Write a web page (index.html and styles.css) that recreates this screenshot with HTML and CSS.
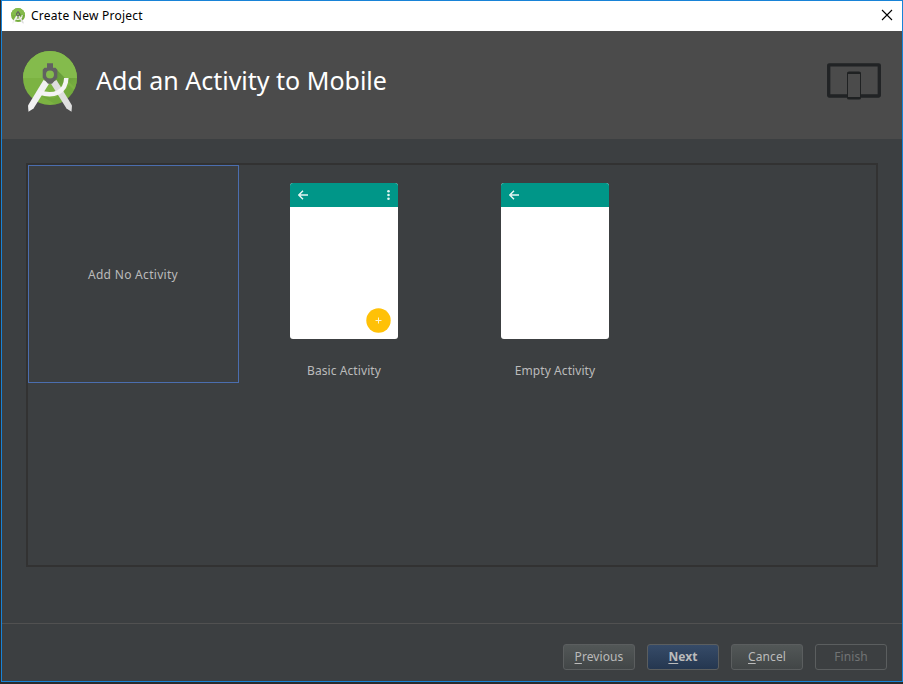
FILE: index.html
```html
<!DOCTYPE html>
<html lang="en">
<head>
<meta charset="utf-8">
<title>Create New Project</title>
<link rel="stylesheet" href="styles.css">
</head>
<body>
<svg class="defs" width="0" height="0">
  <defs>
    <linearGradient id="shade" x1="0" y1="0" x2="1" y2="1"><stop offset="0" stop-color="#4d7f2c"/><stop offset="1" stop-color="#7cb342"/></linearGradient>
    <clipPath id="disc"><circle cx="27" cy="27" r="27"/></clipPath>
  </defs>
  <symbol id="studio" viewBox="0 0 54 61">
    <circle cx="27" cy="27" r="27" fill="#7cb342"/>
    <path d="M0 27a27 27 0 0 1 54 0z" fill="#84bb4c"/>
    <g clip-path="url(#disc)">
      <path d="M32 17L54 39V27H45.500L42 36L30 32z" fill="url(#shade)" opacity=".7"/>
      <path d="M18 45L31 47L41 41L46 34L54 42V54H34z" fill="#689f38" opacity=".45"/>
    </g>
    <path d="M20.500 29L26.500 32L10.500 57.500L5.500 60.800L5 54.500z" fill="#f1f1f1"/>
    <path d="M33.500 29L27.500 32L43.500 57.500L48.500 60.800L49 54.500z" fill="#dedede"/>
    <path d="M43.300 27Q43 37.500 35 41.500Q27 45 16.500 41.300" fill="none" stroke="#f4f4f4" stroke-width="4.500"/>
    <path fill-rule="evenodd" d="M24 12.300h6v4.500h2.500l1.800 2v8l-1.800 2l-3.500 4h-4l-3.500-4l-1.800-2v-8l1.800-2H24zM27 19.500a4 4 0 1 0 0 8a4 4 0 1 0 0-8z" fill="#616161"/>
  </symbol>
  <symbol id="back" viewBox="0 0 10 10"><path d="M10 5H1M5 .7L.8 5L5 9.300" fill="none" stroke="#e4f5f2" stroke-width="1.400"/></symbol>
</svg>
<div class="window">
  <div class="titlebar">
    <svg class="app-icon" width="14" height="16"><use href="#studio"/></svg>
    <span class="caption">Create New Project</span>
    <svg class="close" width="10" height="10" viewBox="0 0 10 10"><path d="M0 0L10 10M10 0L0 10" stroke="#000" stroke-width="1.100"/></svg>
  </div>
  <header class="header">
    <svg class="logo" width="54" height="61"><use href="#studio"/></svg>
    <h1 class="heading">Add an Activity to Mobile</h1>
    <svg class="devices" width="54" height="37" viewBox="0 0 54 37">
      <rect x="1.700" y="1.800" width="50.600" height="31.200" rx=".5" fill="none" stroke="#212325" stroke-width="3.300"/>
      <path d="M20 10Q20 8.500 22 8.500H32Q34 8.500 34 10V35Q34 36.500 32 36.500H22Q20 36.500 20 35z" fill="#1f2122"/>
      <path d="M21 11H33V34H21z" fill="#4b4b4b"/>
    </svg>
  </header>
  <main class="content">
    <div class="gallery">
      <div class="tile selected"><span class="label">Add No Activity</span></div>
      <div class="tile">
        <div class="phone">
          <div class="appbar"><svg width="10" height="10"><use href="#back"/></svg><svg width="3" height="10" viewBox="0 0 3 10" fill="#e4f5f2"><circle cx="1.500" cy="1.300" r="1.300"/><circle cx="1.500" cy="5" r="1.300"/><circle cx="1.500" cy="8.700" r="1.300"/></svg></div>
          <svg class="fab" width="25" height="25" viewBox="0 0 25 25"><circle cx="12.500" cy="12.500" r="12.200" fill="#ffc107"/><path d="M12.500 9.500v6M9.500 12.500h6" stroke="#fff4d0" stroke-width="1"/></svg>
        </div>
        <span class="label">Basic Activity</span>
      </div>
      <div class="tile">
        <div class="phone">
          <div class="appbar"><svg width="10" height="10"><use href="#back"/></svg></div>
        </div>
        <span class="label">Empty Activity</span>
      </div>
    </div>
  </main>
  <footer class="footer">
    <button class="btn"><span><u>P</u>revious</span></button>
    <button class="btn primary"><span><u>N</u>ext</span></button>
    <button class="btn"><span><u>C</u>ancel</span></button>
    <button class="btn disabled" disabled><span>Finish</span></button>
  </footer>
</div>
</body>
</html>
```
FILE: styles.css
```css
* { box-sizing: border-box; }
body {
  margin: 0;
  width: 903px;
  height: 684px;
  padding-left: 1px;
  overflow: hidden;
  background: #2b2b2b;
  font-family: "Noto Sans", "Open Sans", sans-serif;
  font-size: 12px;
}
.defs { position: absolute; }
.window {
  display: flex;
  flex-direction: column;
  height: 682px;
  border: 1px solid #1883d7;
  background: #3c3f41;
}
.titlebar {
  display: flex;
  align-items: center;
  flex: 0 0 30px;
  padding: 0 10px 0 9px;
  background: #fff;
  color: #000;
}
.app-icon { margin-right: 6px; }
.caption { line-height: 16px; letter-spacing: 0.25px; }
.close { margin-left: auto; margin-top: -2px; overflow: visible; }
.header {
  display: flex;
  flex: 0 0 108px;
  padding: 20px 21px 0;
  background: #4b4b4b;
}
.heading {
  margin: 10px 0 0 19px;
  font-size: 25px;
  line-height: 38px;
  font-weight: 400;
  color: #fff;
}
.devices { margin: 12px 0 0 auto; }
.content { flex: 1; padding: 24px 24px 0; }
.gallery {
  display: flex;
  height: 404px;
  border: 2px solid #323232;
}
.tile {
  display: flex;
  flex-direction: column;
  align-items: center;
  width: 211px;
  height: 218px;
  padding: 18px 1px 0 0;
  color: #bbb;
}
.tile.selected {
  justify-content: center;
  padding-top: 2px;
  border: 1px solid #4b6eaf;
}
.label { line-height: 18px; white-space: nowrap; letter-spacing: 0.08px; }
.selected .label { letter-spacing: 0.3px; }
.phone {
  position: relative;
  width: 108px;
  height: 156px;
  margin-bottom: 23px;
  border-radius: 3px;
  overflow: hidden;
  background: #fff;
}
.appbar {
  display: flex;
  align-items: center;
  justify-content: space-between;
  height: 24px;
  padding: 0 8px;
  background: #009688;
}
.fab { position: absolute; right: 7px; bottom: 6px; }
.footer {
  display: flex;
  justify-content: flex-end;
  gap: 12px;
  flex: 0 0 58px;
  padding: 20px 15px 0 0;
  border-top: 1px solid #515151;
}
.btn {
  display: flex;
  align-items: center;
  justify-content: center;
  width: 72px;
  height: 26px;
  padding: 0 0 1px;
  border: 1px solid #5b5e5f;
  border-radius: 3px;
  background: linear-gradient(#525757, #424647);
  color: #bbb;
  font: inherit;
  letter-spacing: 0.1px;
}
.btn u { text-underline-offset: 2px; }
.primary {
  background: linear-gradient(#364b68, #253750);
  font-weight: 700;
}
.disabled { background: #3c3f41; color: #717374; }
```
